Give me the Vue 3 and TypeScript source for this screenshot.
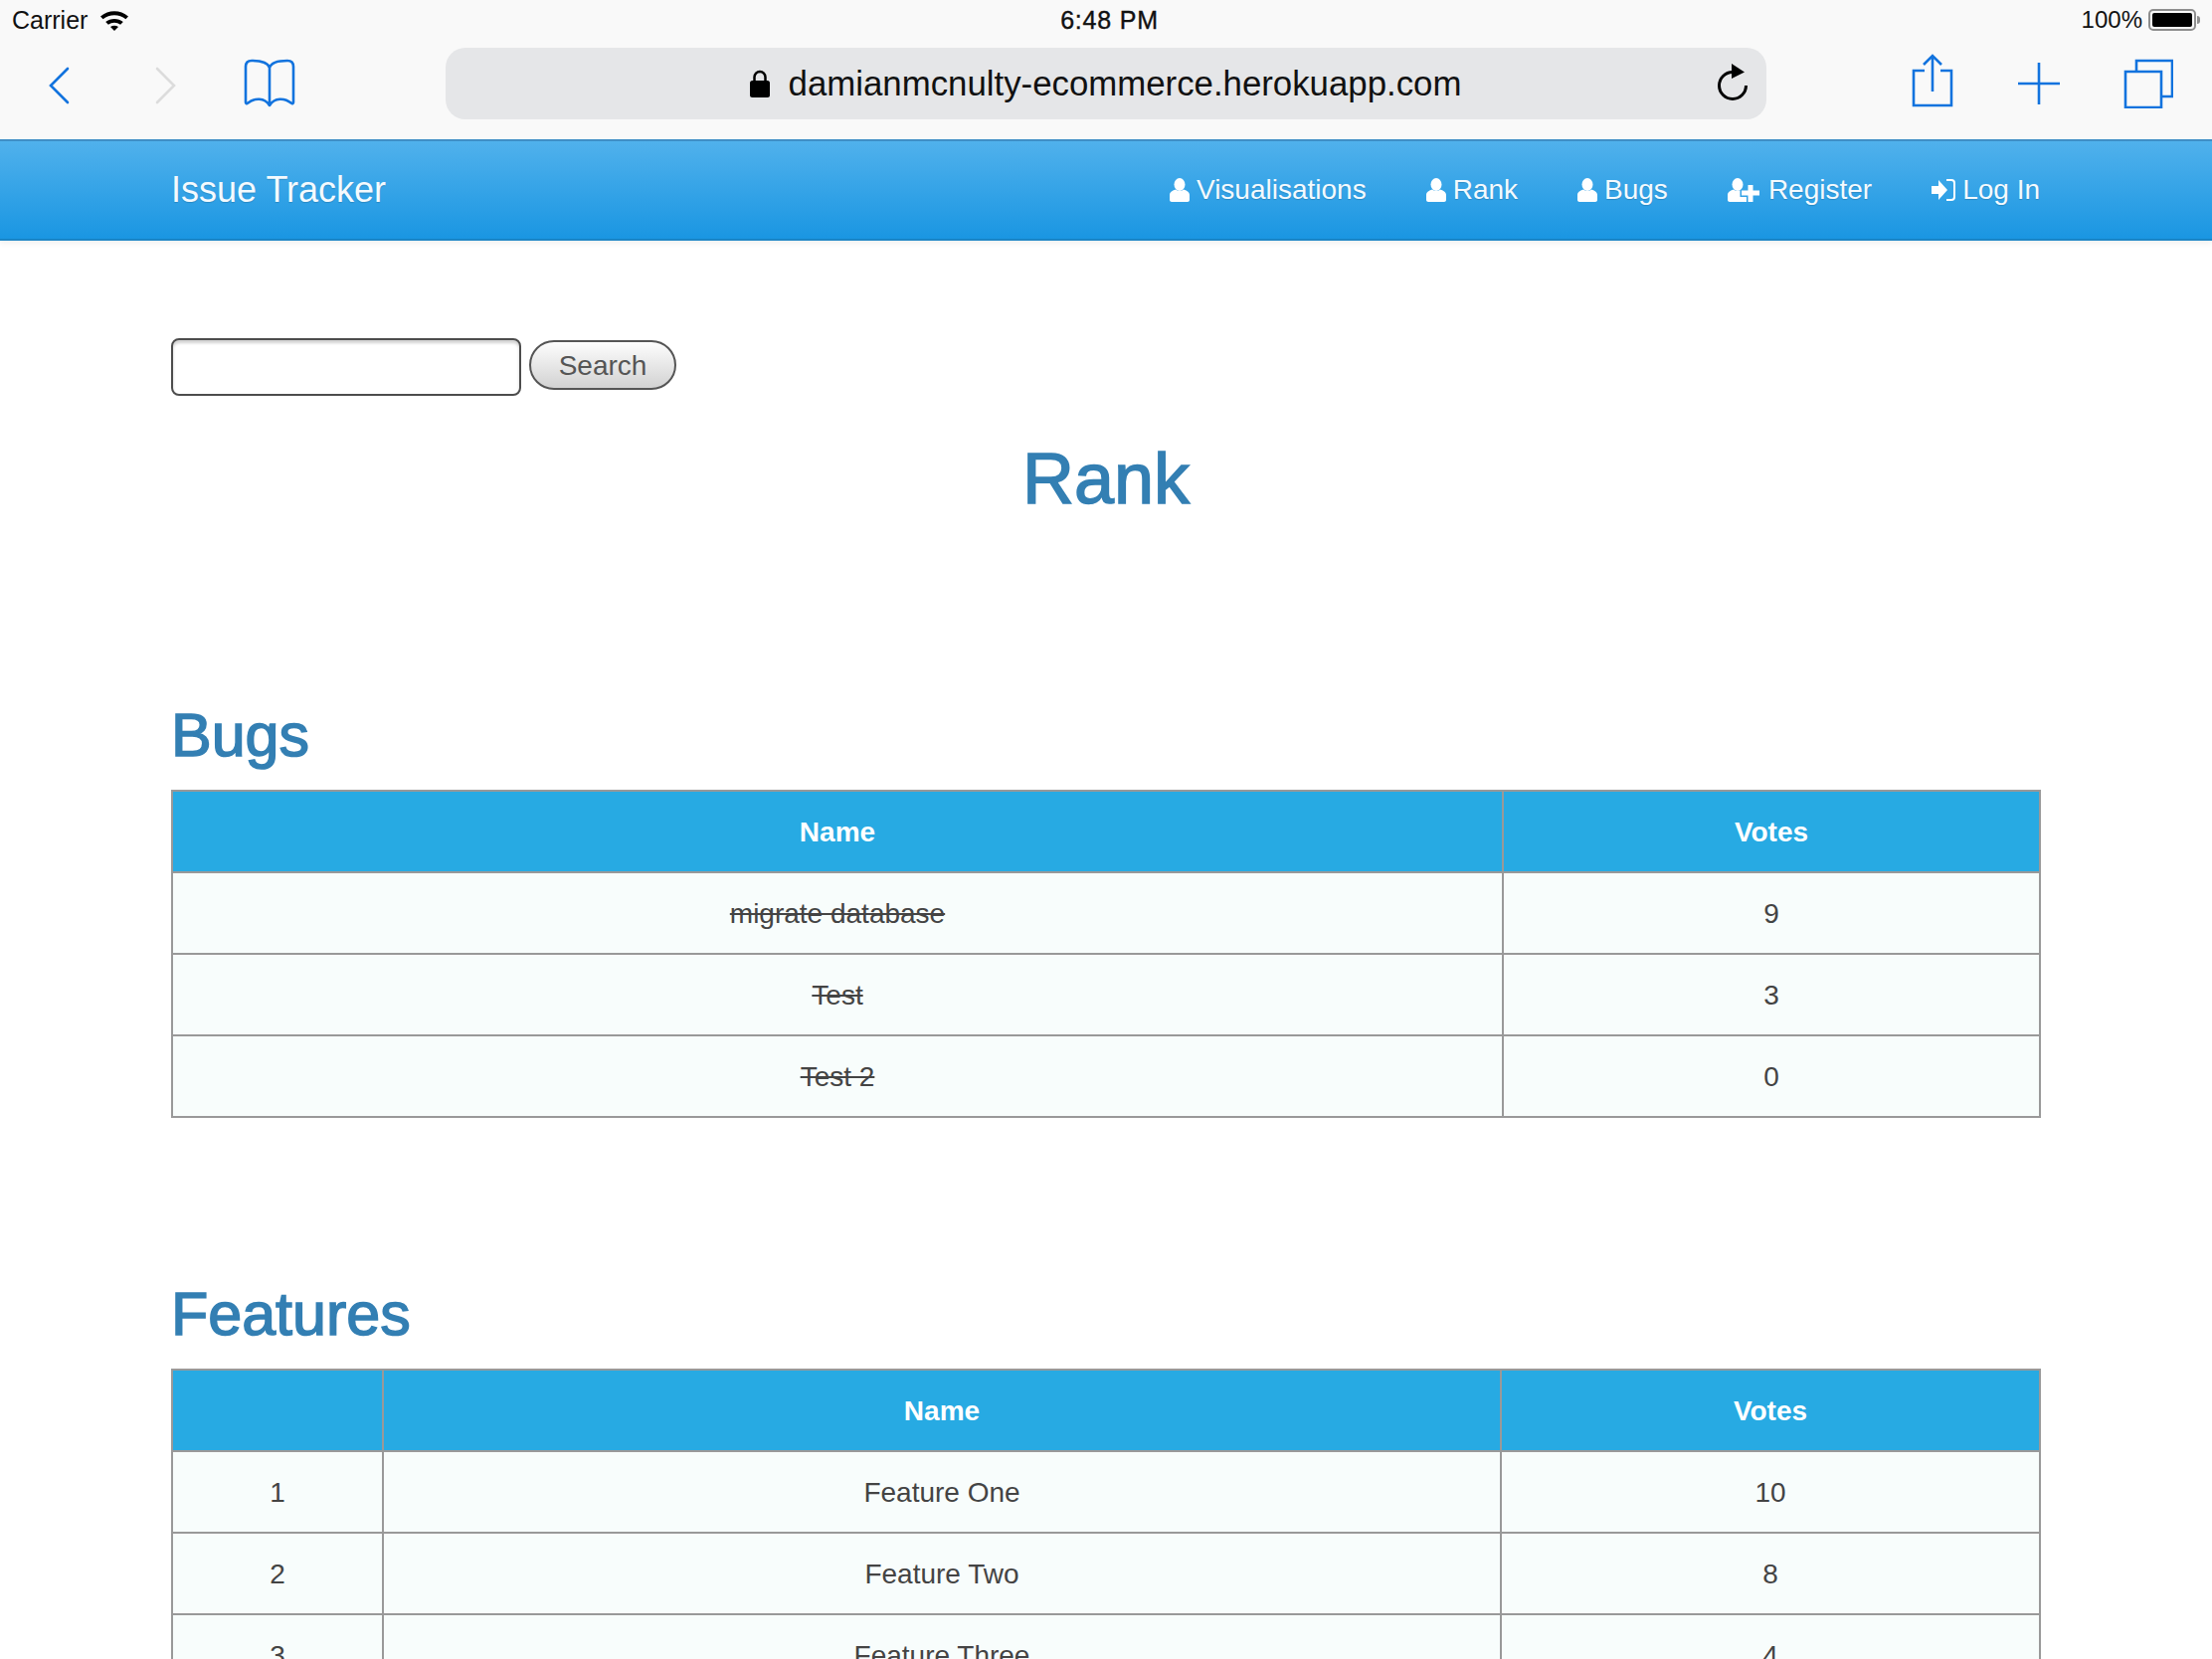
<script setup lang="ts">
interface NavItem {
  label: string
  icon: 'user' | 'add' | 'login'
}

interface Bug {
  name: string
  votes: number
}

interface Feature {
  id: number
  name: string
  votes: number
}

const navItems: NavItem[] = [
  { label: 'Visualisations', icon: 'user' },
  { label: 'Rank', icon: 'user' },
  { label: 'Bugs', icon: 'user' },
  { label: 'Register', icon: 'add' },
  { label: 'Log In', icon: 'login' }
]

const bugs: Bug[] = [
  { name: 'migrate database', votes: 9 },
  { name: 'Test', votes: 3 },
  { name: 'Test 2', votes: 0 }
]

const features: Feature[] = [
  { id: 1, name: 'Feature One', votes: 10 },
  { id: 2, name: 'Feature Two', votes: 8 },
  { id: 3, name: 'Feature Three', votes: 4 }
]
</script>

<template>
  <div class="page">
    <div class="status">
      <div class="status-left">
        <span>Carrier</span>
        <svg class="wifi" width="30" height="22" viewBox="0 0 30 22">
          <path d="M1 7.500C9 .5 21 .5 29 7.500l-2.600 2.800C20 4.900 10 4.900 3.600 10.300z" />
          <path d="M6.200 13C11 9 19 9 23.800 13l-2.700 2.800C17.500 13 12.500 13 8.900 15.800z" />
          <path d="M11 18c2.500-1.800 5.500-1.800 8 0l-4 4z" />
        </svg>
      </div>
      <span class="clock">6:48 PM</span>
      <div class="status-right">
        <span>100%</span>
        <span class="battery"><i></i></span>
        <span class="nub"></span>
      </div>
    </div>

    <div class="toolbar">
      <svg class="tool back" width="22" height="38" viewBox="0 0 22 38">
        <path d="M20 2 3 19l17 17" />
      </svg>
      <svg class="tool forward" width="22" height="38" viewBox="0 0 22 38">
        <path d="m2 2 17 17L2 36" />
      </svg>
      <svg class="tool book" width="52" height="50" viewBox="0 0 52 50">
        <path d="M26 9C24 3 16 2 8 2 4 2 2 4 2 8v36c0 1 1 1.500 2 .8C11 39 21 39 26 47c5-8 15-8 22-2.200 1 .7 2 .2 2-.8V8c0-4-2-6-6-6-8 0-16 1-18 7zm0 0v38" />
      </svg>

      <div class="address">
        <div class="url">
          <svg class="lock" width="20" height="28" viewBox="0 0 20 28">
            <path d="M4.500 12V7.500a5.500 5.500 0 0 1 11 0V12" fill="none" stroke="#000" stroke-width="2.500" />
            <rect x="0" y="11" width="20" height="17" rx="2.500" fill="#000" />
          </svg>
          <span>damianmcnulty-ecommerce.herokuapp.com</span>
        </div>
        <svg class="reload" width="32" height="38" viewBox="0 0 32 38">
          <path d="M16 8.500A13.500 13.500 0 1 0 29.500 22" fill="none" stroke="#000" stroke-width="3" />
          <path d="m15 0 13 8.500L15 15z" fill="#000" />
        </svg>
      </div>

      <svg class="tool share" width="42" height="54" viewBox="0 0 42 54">
        <path d="M13 17H2v35h38V17H29M21 38V3M12 11l9-9 9 9" />
      </svg>
      <svg class="tool plus" width="42" height="42" viewBox="0 0 42 42">
        <path d="M21 0v42M0 21h42" />
      </svg>
      <svg class="tool tabs" width="50" height="50" viewBox="0 0 50 50">
        <path d="M2 13h36v36H2zM13 12V2h36v36H39" />
      </svg>
    </div>

    <nav class="navbar">
      <a class="brand">Issue Tracker</a>
      <ul class="nav-links">
        <li v-for="item in navItems" :key="item.label">
          <svg v-if="item.icon === 'user'" class="nav-icon" width="20" height="24" viewBox="0 0 20 24">
            <ellipse cx="10" cy="6.500" rx="5.500" ry="6.500" />
            <path d="M0 22v-5c0-3 3-4.500 6-5.500 2.500 2 5.500 2 8 0 3 1 6 2.500 6 5.500v5c0 1-1 2-2 2H2c-1 0-2-1-2-2z" />
          </svg>
          <svg v-else-if="item.icon === 'add'" class="nav-icon" width="34" height="24" viewBox="0 0 34 24">
            <ellipse cx="10" cy="6.500" rx="5.500" ry="6.500" />
            <path d="M0 22v-5c0-3 3-4.500 6-5.500 2 1.600 4.400 1.900 6.500 1V19H19v5H2c-1 0-2-1-2-2z" />
            <path d="M20.500 7h5v5.500H32v5h-6.500V24h-5v-6.500H14v-5h6.500z" />
          </svg>
          <svg v-else class="nav-icon" width="24" height="22" viewBox="0 0 24 22">
            <path d="M0 7h7V1l9 10-9 10v-6H0z" />
            <path d="M15 1h5c2 0 3 1 3 3v14c0 2-1 3-3 3h-5" fill="none" stroke="#fff" stroke-width="2" />
          </svg>
          <span>{{ item.label }}</span>
        </li>
      </ul>
    </nav>

    <main class="content">
      <form class="search" @submit.prevent>
        <input type="text" aria-label="Search">
        <button type="submit">Search</button>
      </form>

      <h1>Rank</h1>

      <h2 class="first">Bugs</h2>
      <table>
        <colgroup>
          <col class="bug-name">
          <col>
        </colgroup>
        <thead>
          <tr>
            <th>Name</th>
            <th>Votes</th>
          </tr>
        </thead>
        <tbody>
          <tr v-for="bug in bugs" :key="bug.name">
            <td class="done">{{ bug.name }}</td>
            <td>{{ bug.votes }}</td>
          </tr>
        </tbody>
      </table>

      <h2>Features</h2>
      <table>
        <colgroup>
          <col class="feature-id">
          <col class="feature-name">
          <col>
        </colgroup>
        <thead>
          <tr>
            <th></th>
            <th>Name</th>
            <th>Votes</th>
          </tr>
        </thead>
        <tbody>
          <tr v-for="feature in features" :key="feature.id">
            <td>{{ feature.id }}</td>
            <td>{{ feature.name }}</td>
            <td>{{ feature.votes }}</td>
          </tr>
        </tbody>
      </table>
    </main>
  </div>
</template>

<style>
html,
body {
  margin: 0;
  height: 1668px;
  overflow: hidden;
  background: #fff;
}
</style>

<style scoped>
.page {
  width: 2224px;
  height: 1668px;
  overflow: hidden;
  font-family: "Liberation Sans", Arial, sans-serif;
  color: #444;
}

.status {
  height: 40px;
  padding: 0 11px 0 12px;
  background: #f9f9f9;
  display: grid;
  grid-template-columns: 1fr auto 1fr;
  align-items: center;
  font-size: 25px;
  color: #111;
}

.status-left {
  display: flex;
  align-items: center;
  gap: 12px;
}

.wifi {
  fill: #000;
}

.clock {
  margin-left: 6px;
  letter-spacing: 0.8px;
  -webkit-text-stroke: 0.4px #111;
}

.status-right {
  display: flex;
  align-items: center;
  justify-content: flex-end;
  font-size: 24px;
}

.battery {
  box-sizing: border-box;
  width: 48px;
  height: 22px;
  margin-left: 6px;
  padding: 2px;
  border: 2px solid #8e8e8e;
  border-radius: 5px;
}

.battery i {
  display: block;
  height: 100%;
  background: #000;
  border-radius: 2px;
}

.nub {
  width: 3px;
  height: 8px;
  margin: 0 1px;
  background: #8e8e8e;
  border-radius: 0 3px 3px 0;
}

.toolbar {
  box-sizing: border-box;
  height: 100px;
  padding: 0 0 12px 48px;
  background: #f9f9f9;
  display: flex;
  align-items: center;
}

.tool {
  flex: none;
  fill: none;
  stroke: #1273de;
  stroke-width: 2.6;
  stroke-linecap: round;
}

.back {
  margin-top: 4px;
}

.forward {
  margin: 4px 0 0 86px;
  stroke: #dcdcdc;
}

.book {
  margin-left: 67px;
  stroke-linejoin: round;
}

.address {
  box-sizing: border-box;
  width: 1328px;
  height: 72px;
  margin-left: 151px;
  padding-right: 18px;
  background: #e5e6e8;
  border-radius: 20px;
  display: flex;
  align-items: center;
  justify-content: flex-end;
}

.url {
  flex: 1;
  padding-left: 49px;
  display: flex;
  align-items: center;
  justify-content: center;
  gap: 19px;
  font-size: 34.8px;
  color: #111;
}

.reload {
  margin-top: -2px;
}

.share {
  margin: -6px 0 0 146px;
  stroke-linecap: butt;
}

.plus {
  margin-left: 65px;
  stroke-linecap: butt;
}

.tabs {
  margin-left: 64px;
  stroke-linecap: butt;
}

.navbar {
  box-sizing: border-box;
  height: 102px;
  padding: 0 173px 0 172px;
  background: linear-gradient(#50b1ec, #1a96e2);
  border-top: 2px solid #3f8fc6;
  border-bottom: 2px solid #1b85c6;
  box-shadow: 0 3px 5px rgba(0, 0, 0, 0.06);
  display: flex;
  align-items: center;
  justify-content: space-between;
  color: #f4fafe;
  text-shadow: 0 1px 1px rgba(0, 0, 0, 0.15);
}

.brand {
  font-size: 36px;
}

.nav-links {
  margin: 0;
  padding: 0;
  list-style: none;
  display: flex;
  gap: 60px;
  font-size: 28px;
}

.nav-links li {
  display: flex;
  align-items: center;
  gap: 7px;
}

.nav-icon {
  fill: #fff;
}

.content {
  padding: 98px 172px 0;
}

.search {
  display: flex;
  align-items: flex-start;
  gap: 8px;
  height: 58px;
}

.search input {
  box-sizing: border-box;
  width: 352px;
  height: 58px;
  padding: 0;
  background: #fff;
  border: 2px solid #4d4d4d;
  border-radius: 8px;
  box-shadow: inset 0 3px 3px rgba(0, 0, 0, 0.18);
}

.search button {
  box-sizing: border-box;
  width: 148px;
  height: 50px;
  margin-top: 2px;
  padding: 2px 0 0;
  background: linear-gradient(#fdfdfd, #d2d2d2);
  border: 2px solid #555;
  border-radius: 25px;
  font-family: inherit;
  font-size: 28px;
  color: #555;
}

h1,
h2 {
  margin: 0;
  color: #337fb3;
  font-weight: 400;
  -webkit-text-stroke: 1.5px #337fb3;
}

h1 {
  margin-top: 43px;
  font-size: 72px;
  line-height: 80px;
  text-align: center;
}

h2 {
  margin: 164px 0 22px;
  font-size: 61px;
  line-height: 66px;
}

h2.first {
  margin-top: 185px;
}

table {
  box-sizing: border-box;
  width: 1880px;
  border-collapse: collapse;
  table-layout: fixed;
  font-size: 28px;
  text-align: center;
}

tr {
  height: 82px;
}

th,
td {
  padding: 2px 0 0;
  border: 2px solid #999;
}

th {
  background: #27aae3;
  color: #fff;
  font-weight: 700;
}

td {
  background: #f8fdfc;
}

.done {
  text-decoration: line-through;
}

.bug-name {
  width: 1338px;
}

.feature-id {
  width: 212px;
}

.feature-name {
  width: 1124px;
}
</style>
